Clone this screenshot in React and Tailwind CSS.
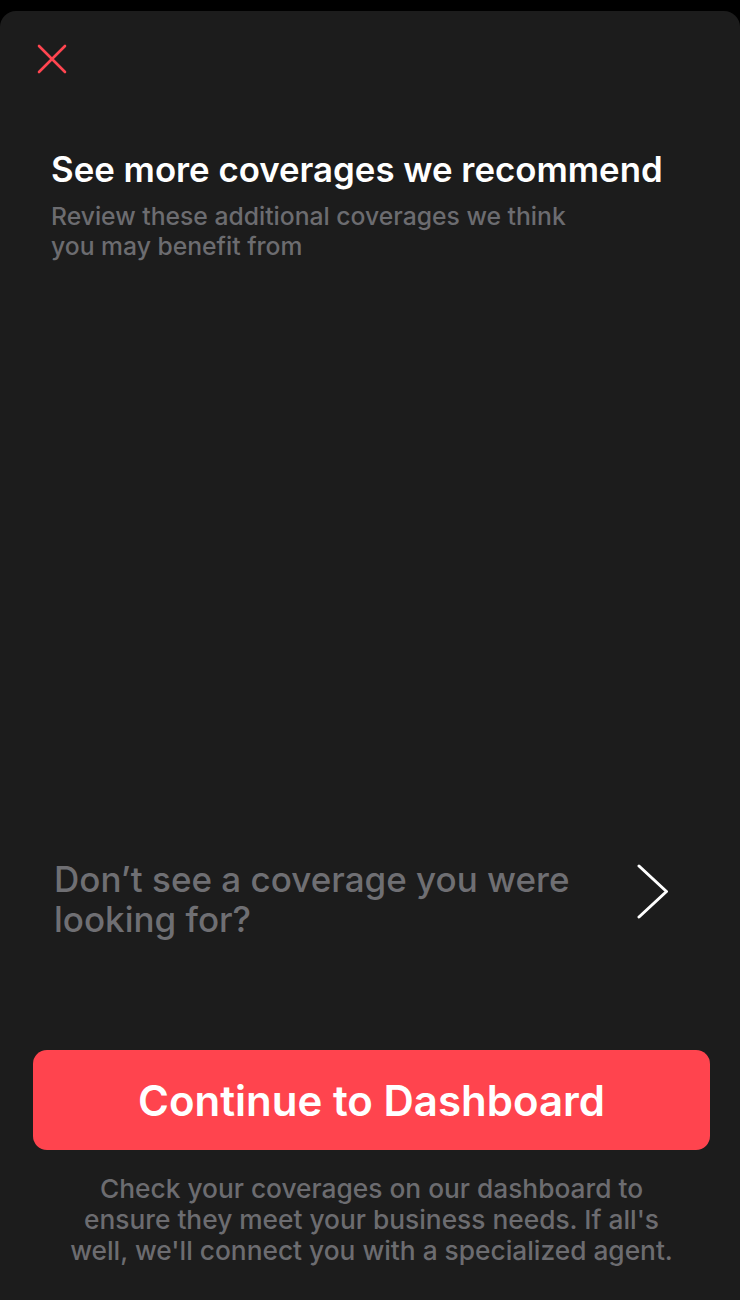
const font = { fontFamily: "Inter, 'Noto Sans', sans-serif" };

const CloseIcon = () => (
    <svg width="30" height="30" viewBox="0 0 30 30" fill="none" stroke="#ff4550" strokeWidth="2.6" strokeLinecap="round">
        <path d="M2 2L28 28M28 2L2 28" />
    </svg>
);

const Chevron = () => (
    <svg width="32" height="55" viewBox="0 0 32 55" fill="none" stroke="#ffffff" strokeWidth="3" strokeLinecap="round" strokeLinejoin="round">
        <path d="M2 2L29.5 27.5L2 53" />
    </svg>
);

export default function App() {
    return (
        <div className="min-h-[1300px] bg-black pt-[11px]" style={font}>
            <div className="flex h-[1289px] flex-col rounded-t-[16px] bg-[#1c1c1c] pl-[33px] pr-[30px]">
                <button className="mt-[33px] ml-[4px] flex h-[30px] w-[30px] items-center justify-center">
                    <CloseIcon />
                </button>

                <h1 className="mt-[74px] ml-[18px] text-[34.8px] font-semibold leading-[42px] text-white">
                    See more coverages we recommend
                </h1>
                <p className="mt-[11px] ml-[18px] max-w-[540px] text-[24.7px] font-medium leading-[30px] text-[#6c6c70]">
                    Review these additional coverages we think you may benefit from
                </p>

                <div className="mt-[598px] ml-[21px] flex items-start justify-between pr-[41px]">
                    <p className="max-w-[540px] text-[35px] font-medium leading-[40px] text-[#6f6f73]">
                        Don’t see a coverage you were looking for?
                    </p>
                    <div className="mt-[5px]">
                        <Chevron />
                    </div>
                </div>

                <button className="mt-[111px] flex h-[100px] w-full items-center justify-center rounded-[14px] bg-[#ff444e] text-[42px] font-semibold text-white">
                    Continue to Dashboard
                </button>

                <p className="mx-auto mt-[23px] max-w-[615px] text-center text-[26.3px] font-medium leading-[31px] text-[#6c6c70]">
                    Check your coverages on our dashboard to ensure they meet your business needs. If all's well, we'll connect you with a specialized agent.
                </p>
            </div>
        </div>
    );
}
